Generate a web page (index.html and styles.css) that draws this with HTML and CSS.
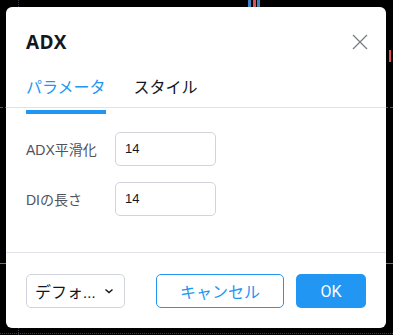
FILE: index.html
```html
<!DOCTYPE html>
<html>
<head>
	<title>ADX</title>
	<link rel="stylesheet" href="styles.css">
</head>
<body>
	<div class="chart">
		<div class="grid_v" style="left: 18px"></div>
		<div class="grid_h" style="top: 333px"></div>
		<div class="grid_h red" style="top: 107px"></div>
		<div class="price_line" style="top: 263px"></div>
		<div class="candle blue" style="left: 248px"></div>
		<div class="candle red" style="left: 253px"></div>
		<div class="candle blue" style="left: 257px"></div>
		<div class="candle red small" style="left: 389px; top: 50px"></div>
	</div>

	<div class="dialog">
		<div class="header">
			<span class="title">ADX</span>
			<span class="close">
				<svg width="18" height="18" viewBox="0 0 18 18">
					<path d="M2 2 L16 16 M16 2 L2 16" stroke="#7a7d87" stroke-width="1.3" fill="none"/>
				</svg>
			</span>
		</div>
		<div class="tabs">
			<div class="tab active">パラメータ</div>
			<div class="tab">スタイル</div>
		</div>
		<div class="content">
			<div class="row">
				<span class="label">ADX平滑化</span>
				<div class="input">14</div>
			</div>
			<div class="row">
				<span class="label">DIの長さ</span>
				<div class="input">14</div>
			</div>
		</div>
		<div class="footer">
			<div class="select">
				<span>デフォ...</span>
				<svg width="10" height="6" viewBox="0 0 10 6">
					<path d="M1.5 1.5 L5 4.5 L8.5 1.5" stroke="#131722" stroke-width="1.5" fill="none"/>
				</svg>
			</div>
			<div class="spacer"></div>
			<div class="btn btn_cancel">キャンセル</div>
			<div class="btn btn_ok">OK</div>
		</div>
	</div>
</body>
</html>
```

FILE: styles.css
```css
body {
	margin: 0;
	background-color: #000;
	font-family: Roboto, "Noto Sans CJK JP", sans-serif;
	color: #131722;
	position: relative;
	height: 335px;
	overflow: hidden;
	padding-top: 7px;
	box-sizing: border-box;
}

/* chart behind the dialog */
.chart {
	position: absolute;
	left: 0;
	top: 0;
	width: 393px;
	height: 335px;
}
.grid_v {
	position: absolute;
	top: 0;
	bottom: 0;
	border-left: 1px dotted #3a3d45;
}
.grid_h {
	position: absolute;
	left: 0;
	right: 0;
	border-top: 1px dotted #3a3d45;
}
.grid_h.red {
	border-top: 1px dashed #8a3a42;
}
.price_line {
	position: absolute;
	left: 0;
	right: 0;
	border-top: 1px solid #6b6e76;
}
.candle {
	position: absolute;
	top: 0;
	width: 3px;
	height: 16px;
}
.candle.blue {
	background-color: #3d7fc0;
}
.candle.red {
	background-color: #d9505c;
}
.candle.small {
	height: 12px;
	width: 2px;
}

.dialog {
	position: relative;
	margin-left: 6px;
	width: 380px;
	height: 321px;
	background-color: #fff;
	border-radius: 6px;
	display: flex;
	flex-direction: column;
}

.header {
	height: 70px;
	padding: 0 20px;
	display: flex;
	align-items: center;
	justify-content: space-between;
}
.title {
	font-size: 19px;
	font-weight: bold;
	font-family: "Open Sans", "Noto Sans CJK JP", sans-serif;
	letter-spacing: 0.3px;
}
.close {
	display: flex;
	margin-right: -3px;
}

.tabs {
	height: 30px;
	padding: 0 20px;
	display: flex;
	gap: 28px;
	border-bottom: 1px solid #e0e3eb;
}
.tab {
	position: relative;
	font-size: 16px;
	line-height: 22px;
	color: #131722;
}
.tab.active {
	color: #2196f3;
}
.tab.active::after {
	content: "";
	position: absolute;
	left: 0;
	right: 0;
	top: 33px;
	height: 4px;
	background-color: #2196f3;
}

.content {
	height: 120px;
	padding: 24px 20px 0 20px;
	border-bottom: 1px solid #e0e3eb;
	display: flex;
	flex-direction: column;
	gap: 16px;
}
.row {
	display: flex;
	align-items: center;
}
.label {
	width: 89px;
	font-size: 14px;
	font-family: "Liberation Sans", "Noto Sans CJK JP", sans-serif;
	color: #50535e;
}
.input {
	width: 90px;
	height: 32px;
	line-height: 32px;
	padding-left: 9px;
	border: 1px solid #d1d4dc;
	border-radius: 5px;
	font-size: 13px;
	font-family: "Liberation Sans", sans-serif;
	color: #131722;
}

.footer {
	padding: 21px 20px 0 20px;
	display: flex;
	align-items: center;
}
.select {
	width: 99px;
	height: 34px;
	box-sizing: border-box;
	border: 1px solid #d1d4dc;
	border-radius: 5px;
	display: flex;
	align-items: center;
	justify-content: space-between;
	padding: 0 10px 0 8px;
	font-size: 16px;
}
.spacer {
	flex: 1;
}
.btn {
	height: 34px;
	box-sizing: border-box;
	border-radius: 5px;
	display: flex;
	align-items: center;
	justify-content: center;
	font-size: 16px;
}
.btn_cancel {
	width: 128px;
	border: 1px solid #2196f3;
	color: #2196f3;
	margin-right: 12px;
}
.btn_ok {
	width: 70px;
	background-color: #2196f3;
	color: #fff;
}
```
